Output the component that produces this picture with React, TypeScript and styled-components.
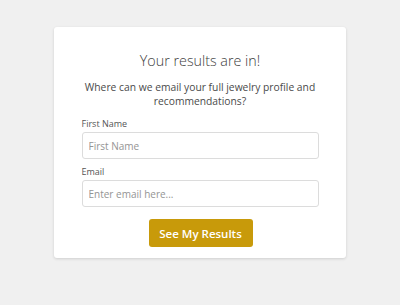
import styled, { createGlobalStyle } from "styled-components";

const GlobalStyle = createGlobalStyle`
  html, body {
    margin: 0;
    padding: 0;
    background: #f0f0f0;
    font-family: "Open Sans", "Liberation Sans", sans-serif;
  }
`;

const Page = styled.div`
  width: 400px;
  height: 305px;
  padding-top: 27px;
  box-sizing: border-box;
  display: flex;
  justify-content: center;
`;

const Card = styled.div`
  width: 292px;
  height: 231px;
  margin-left: -1px;
  box-sizing: border-box;
  padding: 24px 27px 0 28px;
  background: #fff;
  border-radius: 3px;
  box-shadow: 0 1px 3px rgba(0, 0, 0, 0.14);
  display: flex;
  flex-direction: column;
`;

const Title = styled.h1`
  margin: 0;
  font-size: 14.3px;
  line-height: 20px;
  font-weight: 300;
  color: #3c3c3c;
  text-align: center;
`;

const Subtitle = styled.p`
  margin: 9px 0 0;
  font-size: 10.3px;
  line-height: 14px;
  font-weight: 400;
  color: #4a4a4a;
  text-align: center;
  white-space: nowrap;
`;

const Field = styled.div<{ $top: number }>`
  margin-top: ${(p) => p.$top}px;
  display: flex;
  flex-direction: column;
`;

const Label = styled.label`
  font-size: 9px;
  line-height: 12px;
  color: #555;
  margin-bottom: 2px;
`;

const Input = styled.input`
  width: 100%;
  height: 27px;
  box-sizing: border-box;
  border: 1px solid #dcdcdc;
  border-radius: 3px;
  padding: 0 6px;
  font-family: inherit;
  font-size: 10px;
  color: #333;
  outline: none;

  &::placeholder {
    color: #949494;
  }
`;

const Actions = styled.div`
  margin-top: 12px;
  display: flex;
  justify-content: center;
`;

const Button = styled.button`
  width: 104px;
  height: 28px;
  border: none;
  border-radius: 3px;
  background: #c89a0a;
  color: #fff;
  font-family: inherit;
  font-size: 11.5px;
  font-weight: 600;
  padding: 0;
  margin-left: 1px;
  cursor: pointer;
`;

export default function App() {
  return (
    <>
      <GlobalStyle />
      <Page>
        <Card>
          <Title>Your results are in!</Title>
          <Subtitle>
            Where can we email your full jewelry profile and
            <br />
            recommendations?
          </Subtitle>
          <Field $top={10}>
            <Label>First Name</Label>
            <Input placeholder="First Name" />
          </Field>
          <Field $top={7}>
            <Label>Email</Label>
            <Input placeholder="Enter email here..." />
          </Field>
          <Actions>
            <Button>See My Results</Button>
          </Actions>
        </Card>
      </Page>
    </>
  );
}
